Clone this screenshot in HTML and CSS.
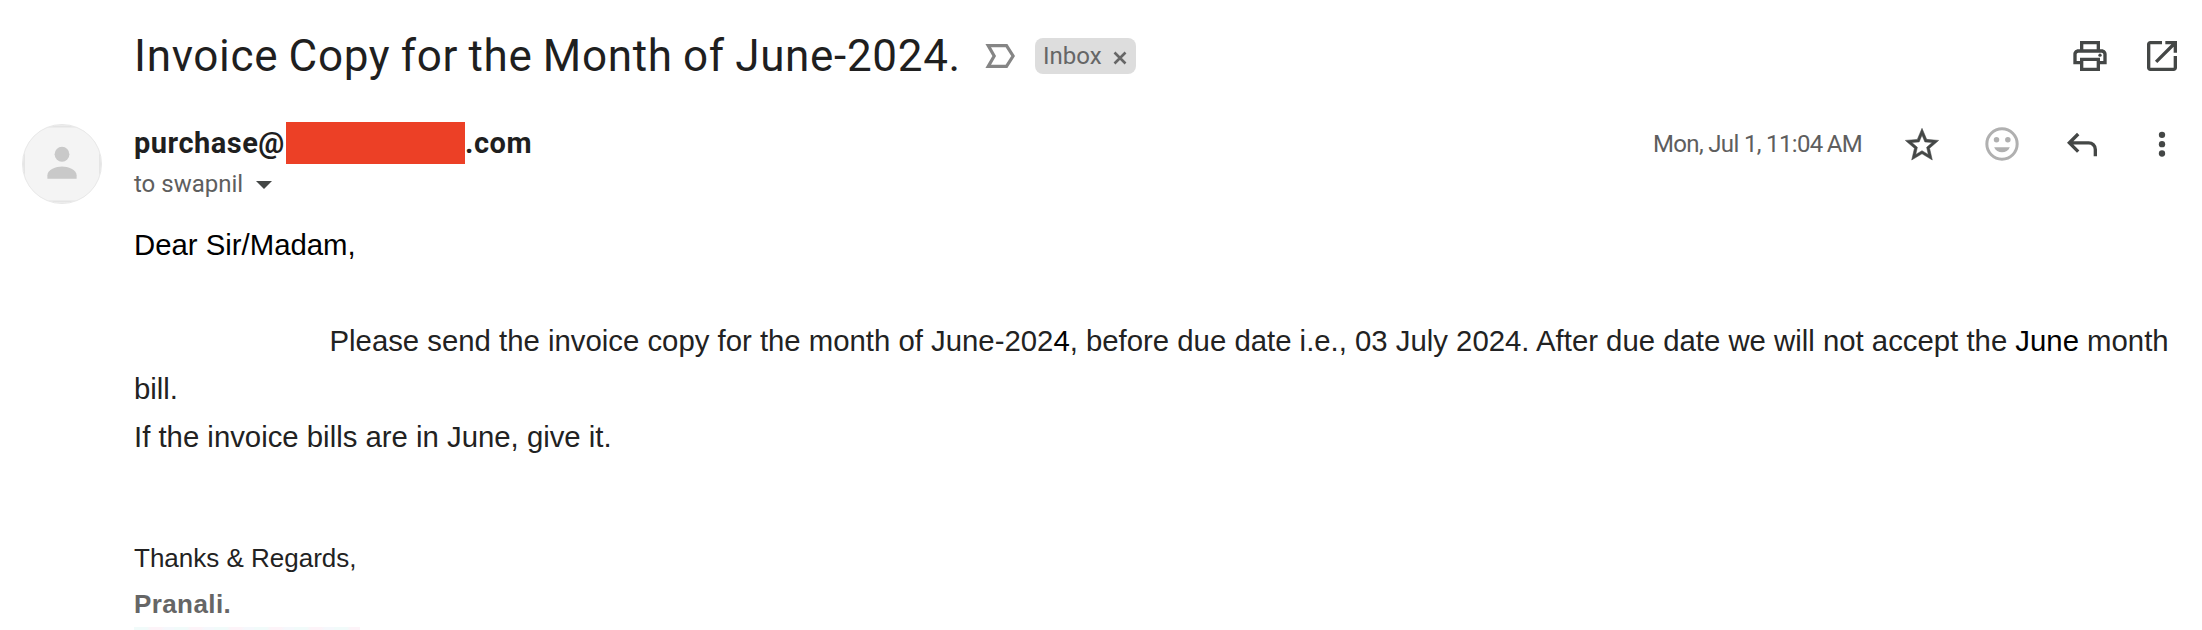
FILE: index.html
```
<!DOCTYPE html>
<html lang="en">
<head>
<meta charset="utf-8">
<title>Invoice Copy for the Month of June-2024.</title>
<link rel="stylesheet" href="styles.css">
</head>
<body>
<main class="mail">
  <header class="subject-row">
    <h1 class="subject">Invoice Copy for the Month of June-2024.</h1>
    <svg class="important" viewBox="0 0 30 24"><path d="M3.2 1.6H21.5L28.1 12L21.5 22.4H3.2L9.2 12Z" fill="none" stroke="#858585" stroke-width="3.2"/></svg>
    <span class="chip">Inbox
      <svg class="chip-close" viewBox="0 0 14 14"><path d="M1.5 1.5L12.5 12.5M12.5 1.5L1.5 12.5" stroke="#666" stroke-width="2.6"/></svg>
    </span>
    <div class="tools">
      <svg class="icon" viewBox="0 0 24 24"><path d="M19 8h-1V3H6v5H5c-1.660 0-3 1.340-3 3v6h4v4h12v-4h4v-6c0-1.660-1.340-3-3-3zM8 5h8v3H8V5zm8 12v2H8v-4h8v2zm2-2v-2H6v2H4v-4c0-.55.45-1 1-1h14c.55 0 1 .45 1 1v4h-2z"/><circle cx="18" cy="11.500" r="1"/></svg>
      <svg class="icon" viewBox="0 0 24 24"><path d="M19 19H5V5h7V3H5c-1.110 0-2 .9-2 2v14c0 1.100.89 2 2 2h14c1.100 0 2-.9 2-2v-7h-2v7zM14 3v2h3.590l-9.830 9.830 1.410 1.410L19 6.410V10h2V3h-7z"/></svg>
    </div>
  </header>

  <section class="message">
    <div class="avatar">
      <svg viewBox="0 0 80 80"><path d="M26 1.500H54M26 78.500H54M1 26V54M79 26V54" stroke="#e4e4e4" stroke-width="2"/><circle cx="40" cy="30" r="7.600" fill="#c9c9c9"/><path d="M25 55V51.500C25 45.500 34 42.500 40 42.500S55 45.500 55 51.500V55Z" fill="#c9c9c9"/></svg>
    </div>
    <div class="content">
      <div class="sender-row">
        <div class="sender"><span>purchase@</span><span class="redacted"></span><span>.com</span></div>
        <time class="date">Mon, Jul 1, 11:04&#8201;AM</time>
        <div class="actions">
          <svg class="icon icon-star" viewBox="0 0 24 24"><path d="M22 9.240l-7.190-.62L12 2 9.190 8.630 2 9.240l5.460 4.730L5.820 21 12 17.270 18.180 21l-1.630-7.030L22 9.240zM12 15.400l-3.760 2.270 1-4.280-3.320-2.880 4.380-.38L12 6.100l1.710 4.040 4.380.38-3.320 2.880 1 4.280L12 15.400z" stroke="#444746" stroke-width=".3"/></svg>
          <svg class="icon icon-react" viewBox="0 0 24 24"><circle cx="12" cy="12" r="9.100" fill="none" stroke="#b0b0b0" stroke-width="1.800"/><circle cx="8.700" cy="9.400" r="1.650"/><circle cx="15.500" cy="9.400" r="1.650"/><path d="M7.300 13.900H16.700C15.900 15.900 14.100 17 12 17S8.100 15.900 7.300 13.900Z"/></svg>
          <svg class="icon" viewBox="0 0 24 24"><path d="M19 19v-4q0-1.250-.875-2.125T16 12H6.825l3.600 3.600L9 17l-6-6 6-6 1.425 1.400-3.600 3.600H16q2.075 0 3.537 1.463T21 15v4z" transform="translate(0 .3)"/></svg>
          <svg class="icon" viewBox="0 0 24 24"><circle cx="12" cy="6.500" r="1.900"/><circle cx="12" cy="12.100" r="1.900"/><circle cx="12" cy="17.700" r="1.900"/></svg>
        </div>
      </div>
      <div class="recipient">to swapnil <span class="caret"></span></div>

      <div class="body">
        <p class="strong-ink">Dear Sir/Madam,</p>
        <p class="indented">Please send the invoice copy for the month of June-202<span class="strong-ink">4</span>, before due date i.e., 03 July 2024. After due date we will not accept the <span class="strong-ink">June</span> month bill.</p>
        <p>If the invoice bills are in June, give it.</p>
      </div>
      <div class="signature">
        <p>Thanks &amp; Regards,</p>
        <p class="name">Pranali.</p>
      </div>
      <div class="banner"></div>
    </div>
  </section>
</main>
</body>
</html>
```
FILE: styles.css
```
* { box-sizing: border-box; }
body { margin: 0; background: #fff; }
h1, p { margin: 0; }

.mail {
  width: 2202px;
  height: 630px;
  overflow: hidden;
  background: #fff;
  color: #1f1f1f;
  font-family: Roboto, sans-serif;
}

.subject-row {
  display: flex;
  align-items: center;
  height: 112px;
  padding: 0 20px 0 134px;
}
.subject {
  width: 851px;
  font-size: 44px;
  font-weight: 400;
  line-height: 56px;
  letter-spacing: 0.68px;
  word-spacing: -1.2px;
  white-space: nowrap;
}
.important { width: 30px; height: 24px; }
.chip {
  display: flex;
  align-items: center;
  justify-content: space-between;
  width: 101px;
  height: 36px;
  margin-left: 20px;
  padding: 0 9px 0 8px;
  border-radius: 8px;
  background: #ddd;
  color: #666;
  font-size: 24px;
  line-height: 36px;
}
.chip-close { width: 14px; height: 14px; margin-top: 3px; }
.tools { display: flex; gap: 32px; margin-left: auto; }
.icon { display: block; width: 40px; height: 40px; fill: #444746; }

.message { display: flex; padding-top: 10px; }
.avatar {
  flex: none;
  width: 80px;
  height: 80px;
  margin: 2px 32px 0 22px;
  border-radius: 50%;
  border: 1px solid #e8e8e8;
  background: #f4f4f4;
  overflow: hidden;
}
.avatar svg { display: block; width: 78px; height: 78px; }
.content { flex: 1; min-width: 0; }

.sender-row {
  display: flex;
  align-items: center;
  height: 42px;
  padding-right: 20px;
}
.sender {
  display: flex;
  align-items: center;
  font-size: 29px;
  font-weight: 700;
  line-height: 40px;
  letter-spacing: 0.5px;
}
.sender span:first-child { width: 152px; }
.sender .redacted {
  width: 179px;
  height: 42px;
  background: #ec4026;
}
.date {
  width: 212px;
  margin-left: auto;
  padding-top: 2px;
  color: #5e5e5e;
  font-size: 24px;
  letter-spacing: -0.66px;
  white-space: nowrap;
}
.actions { display: flex; gap: 40px; margin-left: 37px; padding-top: 3px; }
.icon-star { margin-top: 1px; }
.icon-react { fill: #b0b0b0; }

.recipient {
  display: flex;
  align-items: center;
  gap: 13px;
  height: 38px;
  padding-top: 2px;
  color: #5e5e5e;
  font-size: 24px;
}
.caret {
  margin-top: 2px;
  border: 8px solid transparent;
  border-top-color: #444746;
  border-bottom: 0;
}

.body {
  padding-top: 19px;
  color: #222;
  font: 29.33px/48px "Liberation Sans", Arial, sans-serif;
}
.body .indented { padding-top: 48px; text-indent: 195.5px; }
.strong-ink { color: #000; }

.signature {
  padding-top: 74px;
  color: #222;
  font: 26px/46px "Liberation Sans", Arial, sans-serif;
}
.signature .name { color: #666; font-weight: 700; letter-spacing: 0.4px; }

.banner {
  width: 226px;
  height: 4px;
  background: repeating-linear-gradient(90deg, #f1fbfa 0 13px, #fdf3f8 17px 27px, #f5f8fc 31px 40px);
}
```
